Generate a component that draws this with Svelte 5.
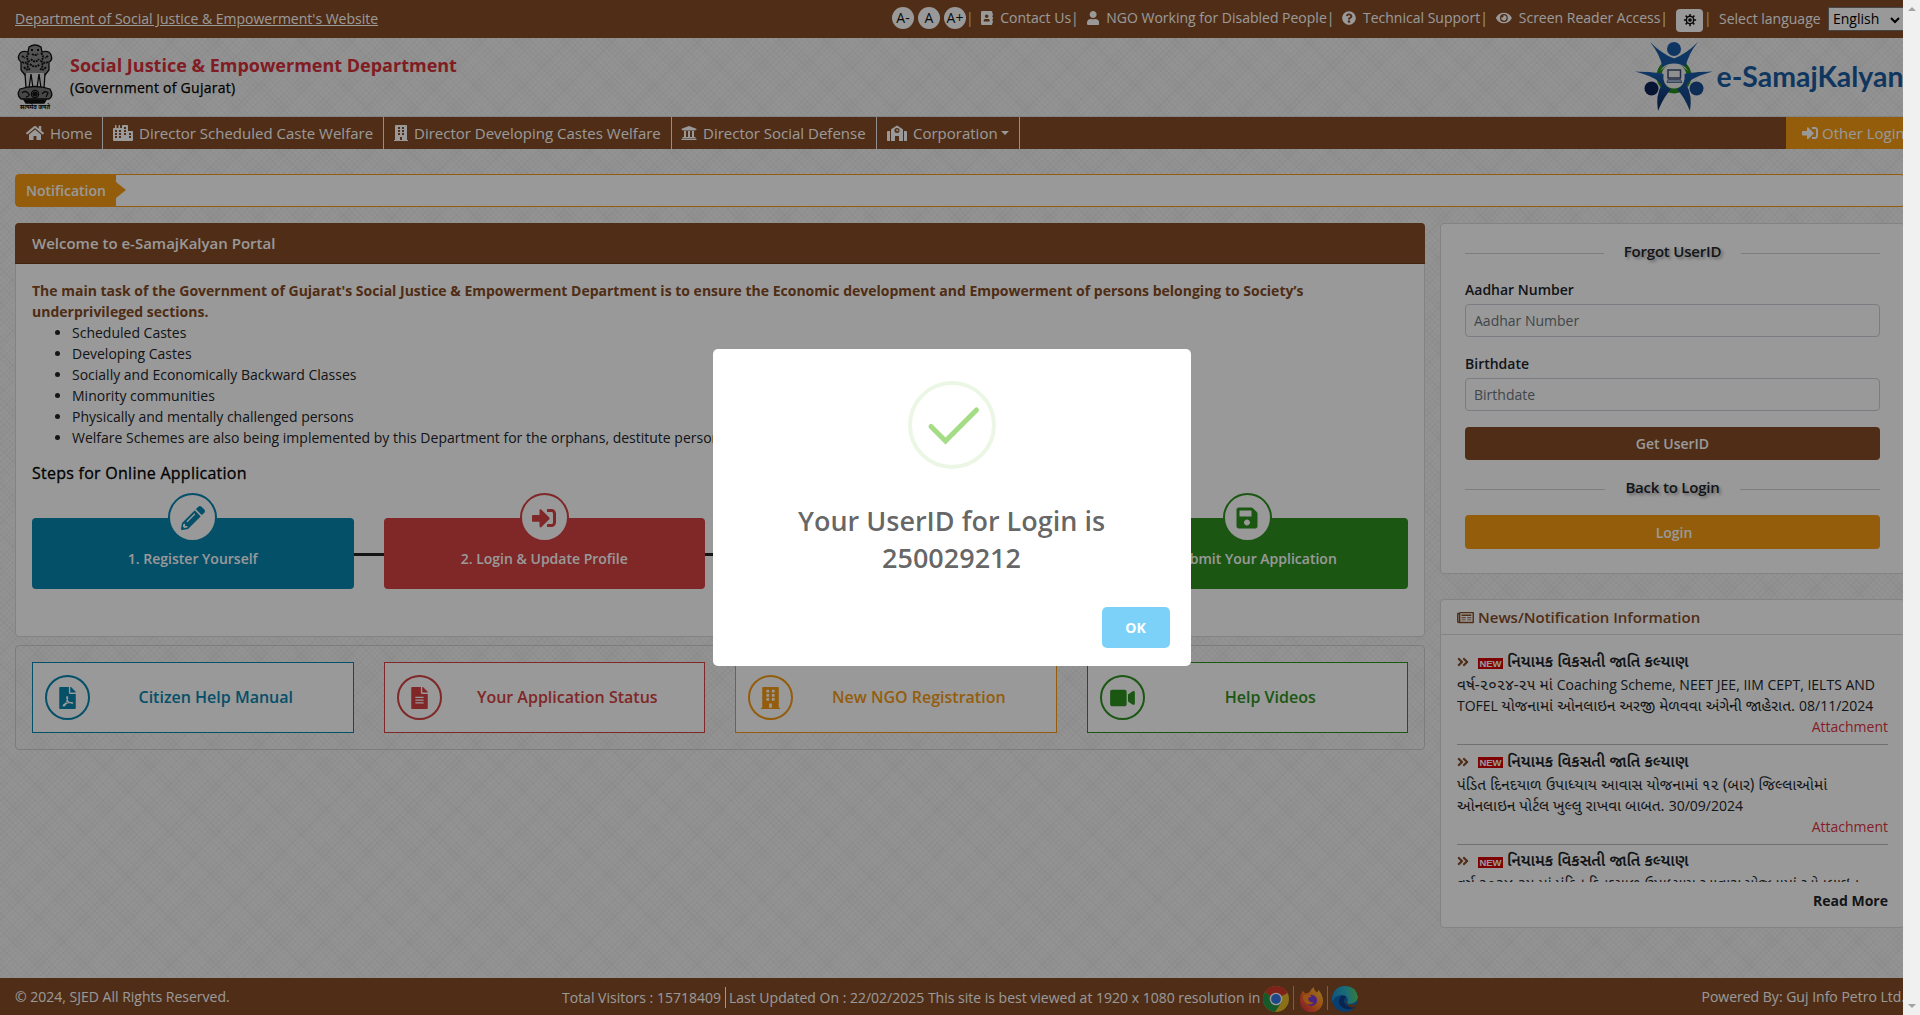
<script>
  const tiles = (list) => list.map(([x, y, w, h]) => `M${x} ${y}h${w}v${h}h-${w}z`).join('');

  const icons = {
    home: ['0 0 576 512', 'M280.37 148.26L96 300.11V464a16 16 0 0 0 16 16l112.06-.29a16 16 0 0 0 15.92-16V368a16 16 0 0 1 16-16h64a16 16 0 0 1 16 16v95.64a16 16 0 0 0 16 16.05L464 480a16 16 0 0 0 16-16V300L295.67 148.26a12.19 12.19 0 0 0-15.3 0zM571.6 251.47L488 182.56V44.05a12 12 0 0 0-12-12h-56a12 12 0 0 0-12 12v72.61L318.47 43a48 48 0 0 0-61 0L4.34 251.47a12 12 0 0 0-1.6 16.9l25.5 31A12 12 0 0 0 45.15 301l235.22-193.74a12.19 12.19 0 0 1 15.3 0L530.9 301a12 12 0 0 0 16.9-1.6l25.5-31a12 12 0 0 0-1.7-16.93z'],
    city: ['0 0 640 512', 'M616 192H480V24c0-13.26-10.74-24-24-24H312c-13.26 0-24 10.74-24 24v72h-64V16c0-8.84-7.16-16-16-16h-16c-8.84 0-16 7.16-16 16v80h-64V16c0-8.84-7.16-16-16-16H80c-8.84 0-16 7.16-16 16v80H24c-13.26 0-24 10.74-24 24v360c0 17.67 14.33 32 32 32h576c17.67 0 32-14.33 32-32V216c0-13.26-10.75-24-24-24z' + tiles([[64, 160, 64, 64], [64, 256, 64, 64], [64, 352, 64, 64], [192, 160, 64, 64], [192, 256, 64, 64], [192, 352, 64, 64], [352, 64, 64, 64], [352, 160, 64, 64], [352, 256, 64, 64], [512, 256, 64, 64], [512, 352, 64, 64]])],
    building: ['0 0 448 512', 'M436 480h-20V24c0-13.255-10.745-24-24-24H56C42.745 0 32 10.745 32 24v456H12c-6.627 0-12 5.373-12 12v20h448v-20c0-6.627-5.373-12-12-12z' + tiles([[128, 64, 64, 64], [256, 64, 64, 64], [128, 160, 64, 64], [256, 160, 64, 64], [128, 256, 64, 64], [256, 256, 64, 64], [192, 384, 64, 96]])],
    bank: ['0 0 512 512', 'M496 128v16a8 8 0 0 1-8 8h-24v12c0 6.627-5.373 12-12 12H60c-6.627 0-12-5.373-12-12v-12H24a8 8 0 0 1-8-8v-16a8 8 0 0 1 4.941-7.392l232-88a7.996 7.996 0 0 1 6.118 0l232 88A8 8 0 0 1 496 128zm-24 304H40c-13.255 0-24 10.745-24 24v16a8 8 0 0 0 8 8h464a8 8 0 0 0 8-8v-16c0-13.255-10.745-24-24-24zM96 192v192H60c-6.627 0-12 5.373-12 12v20h416v-20c0-6.627-5.373-12-12-12h-36V192h-64v192h-64V192h-64v192h-64V192H96z'],
    school: ['0 0 640 512', 'M0 224v272c0 8.84 7.16 16 16 16h80V192H32c-17.67 0-32 14.33-32 32zm608-32h-64v320h80c8.84 0 16-7.16 16-16V224c0-17.67-14.33-32-32-32zM497.8 131.6L338 21.4a32 32 0 0 0-35.5 0L142.2 131.6A32 32 0 0 0 128 158v354h128V368a16 16 0 0 1 16-16h96a16 16 0 0 1 16 16v144h128V158a32 32 0 0 0-14.2-26.4zM320 256a80 80 0 1 1 0-160 80 80 0 0 1 0 160zM304 128h32v40h28v32h-60z'],
    signin: ['0 0 512 512', 'M416 448h-84c-6.6 0-12-5.4-12-12v-40c0-6.6 5.4-12 12-12h84c17.7 0 32-14.3 32-32V160c0-17.7-14.3-32-32-32h-84c-6.6 0-12-5.4-12-12V76c0-6.6 5.4-12 12-12h84c53 0 96 43 96 96v192c0 53-43 96-96 96zm-47-201L201 79c-15-15-41-4.5-41 17v96H24c-13.3 0-24 10.7-24 24v96c0 13.3 10.7 24 24 24h136v96c0 21.5 26 32 41 17l168-168c9.3-9.4 9.3-24.6 0-34z'],
    contact: ['0 0 448 512', 'M436 160c6.6 0 12-5.4 12-12v-40c0-6.6-5.4-12-12-12h-20V48c0-26.5-21.5-48-48-48H48C21.5 0 0 21.5 0 48v416c0 26.5 21.5 48 48 48h320c26.5 0 48-21.5 48-48v-48h20c6.6 0 12-5.4 12-12v-40c0-6.6-5.4-12-12-12h-20v-64h20c6.6 0 12-5.4 12-12v-40c0-6.6-5.4-12-12-12h-20v-64h20zm-228-32c35.300 0 64 28.700 64 64s-28.700 64-64 64-64-28.700-64-64 28.700-64 64-64zm112 236.800c0 10.600-10 19.200-22.400 19.200H118.400C106 384 96 375.400 96 364.800v-19.200c0-31.800 30.100-57.600 67.200-57.600h5c12.300 5.100 25.700 8 39.800 8s27.600-2.900 39.800-8h5c37.100 0 67.200 25.800 67.200 57.600v19.200z'],
    user: ['0 0 448 512', 'M224 256c70.7 0 128-57.3 128-128S294.7 0 224 0 96 57.3 96 128s57.3 128 128 128zm89.6 32h-16.7c-22.2 10.2-46.9 16-72.9 16s-50.6-5.8-72.9-16h-16.7C60.2 288 0 348.2 0 422.4V464c0 26.5 21.5 48 48 48h352c26.5 0 48-21.5 48-48v-41.6c0-74.2-60.2-134.4-134.4-134.4z'],
    question: ['0 0 512 512', 'M504 256c0 136.997-111.043 248-248 248S8 392.997 8 256C8 119.083 119.043 8 256 8s248 111.083 248 248zM262.655 90c-54.497 0-89.255 22.957-116.549 63.758-3.536 5.286-2.353 12.415 2.715 16.258l34.699 26.31c5.205 3.947 12.621 3.008 16.665-2.122 17.864-22.658 30.113-35.797 57.303-35.797 20.429 0 45.698 13.148 45.698 32.958 0 14.976-12.363 22.667-32.534 33.976C247.128 238.528 216 254.941 216 296v4c0 6.627 5.373 12 12 12h56c6.627 0 12-5.373 12-12v-1.333c0-28.462 83.186-29.647 83.186-106.667 0-58.002-60.165-102-116.531-102zM256 338c-25.365 0-46 20.635-46 46 0 25.364 20.635 46 46 46s46-20.636 46-46c0-25.365-20.635-46-46-46z'],
    eye: ['0 0 576 512', 'M572.52 241.4C518.29 135.59 410.93 64 288 64S57.68 135.64 3.48 241.41a32.35 32.35 0 0 0 0 29.19C57.71 376.41 165.07 448 288 448s230.32-71.64 284.52-177.41a32.35 32.35 0 0 0 0-29.19zM288 400a144 144 0 1 1 144-144 143.93 143.93 0 0 1-144 144zm0-240a95.31 95.31 0 0 0-25.31 3.79 47.85 47.85 0 0 1-66.9 66.9A95.78 95.78 0 1 0 288 160z'],
    pencil: ['0 0 512 512', 'M497.9 142.1l-46.1 46.1c-4.7 4.7-12.3 4.7-17 0l-111-111c-4.7-4.7-4.7-12.3 0-17l46.1-46.1c18.7-18.7 49.1-18.7 67.9 0l60.1 60.1c18.8 18.7 18.8 49.1 0 67.9zM284.2 99.8L21.6 362.4.4 483.9c-2.9 16.4 11.4 30.6 27.8 27.8l121.5-21.3 262.6-262.6c4.7-4.7 4.7-12.3 0-17l-111-111c-4.8-4.7-12.4-4.7-17.1 0zM124.1 339.9c-5.5-5.5-5.5-14.3 0-19.8l154-154c5.5-5.5 14.3-5.5 19.8 0s5.5 14.3 0 19.8l-154 154c-5.5 5.5-14.3 5.5-19.8 0zM88 424h48v36.3l-64.5 11.3-31.1-31.1L51.7 376H88v48z'],
    save: ['0 0 448 512', 'M433.941 129.941l-83.882-83.882A48 48 0 0 0 316.118 32H48C21.49 32 0 53.49 0 80v352c0 26.51 21.49 48 48 48h352c26.51 0 48-21.49 48-48V163.882a48 48 0 0 0-14.059-33.941zM224 416c-35.346 0-64-28.654-64-64 0-35.346 28.654-64 64-64s64 28.654 64 64c0 35.346-28.654 64-64 64zm96-304.52V212c0 6.627-5.373 12-12 12H76c-6.627 0-12-5.373-12-12V108c0-6.627 5.373-12 12-12h228.52c3.183 0 6.235 1.264 8.485 3.515l3.48 3.48A11.996 11.996 0 0 1 320 111.48z'],
    file: ['0 0 384 512', 'M224 136V0H24C10.7 0 0 10.7 0 24v464c0 13.3 10.7 24 24 24h336c13.3 0 24-10.7 24-24V160H248c-13.2 0-24-10.8-24-24zM384 122v6H256V0h6c6.4 0 12.500 2.500 17 7l98 98c4.500 4.500 7 10.600 7 17z' + tiles([[96, 224, 192, 32], [96, 288, 192, 32], [96, 352, 192, 32]])],
    pdf: ['0 0 384 512', 'M224 136V0H24C10.7 0 0 10.7 0 24v464c0 13.3 10.7 24 24 24h336c13.3 0 24-10.7 24-24V160H248c-13.2 0-24-10.8-24-24zM384 122v6H256V0h6c6.4 0 12.500 2.500 17 7l98 98c4.500 4.500 7 10.600 7 17zM168 216h34c16 34 2 62-3 85 12 24 29 38 48 49 38-7 78-4 78 20 0 35-55 23-89 4-25 5-46 12-66 21-27 47-58 72-87 56-15-35 17-54 56-76 16-29 26-54 34-79-10-30-16-56-5-80zm11 122c-5 14-11 25-18 36 17-6 30-10 45-13-11-6-20-14-27-23z'],
    video: ['0 0 576 512', 'M336.2 64H47.8C21.4 64 0 85.4 0 111.8v288.4C0 426.6 21.4 448 47.8 448h288.4c26.4 0 47.8-21.4 47.8-47.8V111.8c0-26.4-21.4-47.800-47.800-47.800zm189.400 37.700L416 177.300v157.400l109.600 75.500c21.200 14.600 50.400-.3 50.400-25.800V127.500c0-25.400-29.100-40.400-50.400-25.800z'],
    news: ['0 0 576 512', 'M552 64H112c-20.858 0-38.643 13.377-45.248 32H24c-13.255 0-24 10.745-24 24v272c0 30.928 25.072 56 56 56h496c13.255 0 24-10.745 24-24V88c0-13.255-10.745-24-24-24zM48 392V144h16v248c0 4.411-3.589 8-8 8s-8-3.589-8-8zm480 8H111.422c.374-2.614.578-5.283.578-8V112h416v288zM152 152h336v56H152zM152 248h144v32H152zM152 320h144v32H152zM344 248h144v32H344zM344 320h144v32H344z'],
    chevrons: ['0 0 448 512', 'M224 273L88 409c-9 9-25 9-34 0l-22-23c-10-9-10-24 0-34l96-96-96-96c-10-9-10-25 0-34l22-23c9-9 25-9 34 0l136 136c10 9 10 25 0 34zM416 239L280 103c-9-9-25-9-34 0l-22 23c-10 9-10 25 0 34l96 96-96 96c-10 10-10 25 0 34l22 23c9 9 25 9 34 0l136-136c10-9 10-25 0-34z']
  };

  const helpers = [
    { name: 'contact', text: 'Contact Us', cls: 'contact' },
    { name: 'user', text: 'NGO Working for Disabled People', cls: 'ngo' },
    { name: 'question', text: 'Technical Support', cls: 'support' },
    { name: 'eye', text: 'Screen Reader Access', cls: 'reader' }
  ];

  const menu = [
    { icon: 'home', text: 'Home', cls: 'm-home' },
    { icon: 'city', text: 'Director Scheduled Caste Welfare', cls: 'm-caste' },
    { icon: 'building', text: 'Director Developing Castes Welfare', cls: 'm-dev' },
    { icon: 'bank', text: 'Director Social Defense', cls: 'm-def' },
    { icon: 'school', text: 'Corporation', cls: 'm-corp', caret: true }
  ];

  const groups = [
    'Scheduled Castes',
    'Developing Castes',
    'Socially and Economically Backward Classes',
    'Minority communities',
    'Physically and mentally challenged persons',
    'Welfare Schemes are also being implemented by this Department for the orphans, destitute persons and beggars.'
  ];

  const steps = [
    { icon: 'pencil', text: '1. Register Yourself', tone: 'blue' },
    { icon: 'signin', text: '2. Login & Update Profile', tone: 'red' },
    { icon: 'file', text: '3. Fill Application', tone: 'orange' },
    { icon: 'save', text: '4. Submit Your Application', tone: 'green' }
  ];

  const shortcuts = [
    { icon: 'pdf', text: 'Citizen Help Manual', tone: 'blue' },
    { icon: 'file', text: 'Your Application Status', tone: 'red' },
    { icon: 'building', text: 'New NGO Registration', tone: 'orange' },
    { icon: 'video', text: 'Help Videos', tone: 'green' }
  ];

  const news = [
    ['વર્ષ-૨૦૨૪-૨૫ માં Coaching Scheme, NEET JEE, IIM CEPT, IELTS AND', 'TOFEL યોજનામાં ઓનલાઇન અરજી મેળવવા અંગેની જાહેરાત. 08/11/2024'],
    ['પંડિત દિનદયાળ ઉપાધ્યાય આવાસ યોજનામાં ૧૨ (બાર) જિલ્લાઓમાં', 'ઓનલાઇન પોર્ટલ ખુલ્લુ રાખવા બાબત. 30/09/2024'],
    ['વર્ષ ૨૦૨૪-૨૫ માં પંડિત દિનદયાળ ઉપાધ્યાય આવાસ યોજનામાં ઓનલાઇન']
  ];

  // Split a line into Gujarati and Latin runs so each script gets its own size.
  const runs = (line) => line.split(/([A-Za-z0-9/,][A-Za-z0-9/, ]*)/).filter(Boolean).map((t) => ({ t, gu: /[\u0A80-\u0AFF]/.test(t) }));
</script>

{#snippet icon(name)}
  <svg class="ico" viewBox={icons[name][0]} aria-hidden="true"><path d={icons[name][1]} fill="currentColor" fill-rule="evenodd" /></svg>
{/snippet}

<div class="page">
  <div class="topbar">
    <a class="dept" href="#site">Department of Social Justice &amp; Empowerment's Website</a>
    <div class="tools">
      <span class="size">A-</span><span class="size">A</span><span class="size last">A+</span>
      <span class="bar first">|</span>
      {#each helpers as h}
        <span class="helper {h.cls}">{@render icon(h.name)}<span>{h.text}|</span></span>
      {/each}
      <span class="theme">
        <svg viewBox="0 0 16 16" class="gear"><circle cx="8" cy="8" r="4.2" fill="none" stroke="#111" stroke-width="1.7" /><circle cx="8" cy="8" r="2.1" fill="#111" /><path d="M8 1v3M8 12v3M1 8h3M12 8h3M3 3l2 2M11 11l2 2M13 3l-2 2M5 11l-2 2" stroke="#111" stroke-width="1.7" /></svg>
      </span>
      <span class="bar second-bar">|</span>
      <span class="lang">Select language</span>
      <span class="select">English<svg viewBox="0 0 10 7" class="chev"><path d="M1 1l4 4 4-4" fill="none" stroke="#000" stroke-width="2" /></svg></span>
    </div>
  </div>

  <header>
    <svg class="emblem" viewBox="0 0 38 67">
      <g fill="#8a8a8a" stroke="#111" stroke-width="1.3">
        <path d="M13 3q6-4 12 0l1 5q7-2 9 3 2 5-2 7v8l-4 5H9l-4-5v-8q-4-3-2-7 2-5 9-3z" />
        <path d="M13 9q-4 4 0 8-3 4 0 8M25 9q4 4 0 8 3 4 0 8M15 6h2m4 0h2M16 10q3 2 6 0M6 12l3 2m23-2l-3 2M6 18q4 2 6-1M32 18q-4 2-6-1M15 15q4 5 8 0M14 20q5 5 10 0M8 23q3 4 6 2M30 23q-3 4-6 2" fill="none" stroke-width="1.9" stroke-dasharray="2 .8" />
        <path d="M9 29l1 15h3l2-14 2 14h4l2-14 2 14h3l1-15" fill="#ddd" />
        <path d="M4 45q15-5 30 0 4 7-1 10H5q-5-4-1-10z" fill="#777" />
        <circle cx="19" cy="50" r="3.6" fill="#bbb" /><path d="M6 49q3-3 6 0t-2 4M26 50q3-4 6-1l-2 4M19 46v8M15 50h8M16.500 47.500l5 5m0-5l-5 5" fill="none" />
        <path d="M8 56h22l-2 3H10z" fill="#111" />
      </g>
      <text x="19" y="65" text-anchor="middle" class="motto" textLength="30" lengthAdjust="spacingAndGlyphs">सत्यमेव जयते</text>
    </svg>
    <div class="brand">
      <h1>Social Justice &amp; Empowerment Department</h1>
      <p>(Government of Gujarat)</p>
    </div>
    <svg class="logo" viewBox="0 0 270 76">
      <defs>
        <linearGradient id="lg" x1="0" y1="0" x2="0" y2="1"><stop offset="0" stop-color="#1b5fae" /><stop offset="1" stop-color="#0c2659" /></linearGradient>
        <linearGradient id="lr" x1="0" y1="0" x2="0" y2="1"><stop offset="0" stop-color="#1a5ba6" /><stop offset="1" stop-color="#133f7c" /></linearGradient>
      </defs>
      <circle cx="39" cy="35" r="14.500" fill="none" stroke="#2a8a1e" stroke-width="6" />
      <circle cx="39" cy="35" r="12.500" fill="#f1f1f1" />
      <path d="M25 30L31 22 39 19l8 3 6 8-6-5-8-2-8 2z" fill="#f1f1f1" />
      <path d="M15 1Q27 13 39 17.500 51 13 63 1 53 13 50.500 26.500 46 22.500 39 22.500T27.500 26.500Q25 13 15 1z" fill="#1a5ba6" />
      <path d="M0 30.500Q22 31 28.500 33 27 43.500 36 48.500 29 55 23 70 20.500 54 26.500 44 22 36 0 30.500z" fill="url(#lg)" />
      <path d="M78 30.500Q56 31 49.500 33 51 43.500 42 48.500 49 55 55 70 57.500 54 51.500 44 56 36 78 30.500z" fill="url(#lr)" />
      <circle cx="39" cy="8" r="7" fill="#1a5ba6" /><circle cx="16.500" cy="47.500" r="7" fill="#0c2456" /><circle cx="61.500" cy="47.500" r="7" fill="#174b8f" />
      <rect x="33" y="29" width="12.500" height="8" fill="#eee" stroke="#3c4a70" stroke-width="1.500" /><path d="M33 38.500h12.500l1.500 3H32z" fill="#9fb0d0" stroke="#5f7298" />
      <text x="81.500" y="46" class="wordmark" textLength="187" lengthAdjust="spacingAndGlyphs">e-SamajKalyan</text>
    </svg>
  </header>

  <nav>
    {#each menu as m}
      <a href="#nav" class={m.cls}>{@render icon(m.icon)}<span>{m.text}</span>{#if m.caret}<i class="caret"></i>{/if}</a>
    {/each}
    <a href="#login" class="other">{@render icon('signin')}<span>Other Login</span></a>
  </nav>

  <div class="notice"><strong>Notification</strong></div>

  <div class="columns">
    <main>
      <section class="card welcome">
        <h2>Welcome to e-SamajKalyan Portal</h2>
        <div class="welcome-body">
          <p class="lead">The main task of the Government of Gujarat's Social Justice &amp; Empowerment Department is to ensure the Economic development and Empowerment of persons belonging to Society’s<br />underprivileged sections.</p>
          <ul>{#each groups as g}<li>{g}</li>{/each}</ul>
          <h3>Steps for Online Application</h3>
          <div class="steps">
            {#each steps as s}
              <div class="step {s.tone}"><span class="disc">{@render icon(s.icon)}</span><span>{s.text}</span></div>
            {/each}
          </div>
        </div>
      </section>
      <section class="shortcuts">
        {#each shortcuts as s}
          <a href="#go" class="shortcut {s.tone}"><span class="ring">{@render icon(s.icon)}</span><span class="cap">{s.text}</span></a>
        {/each}
      </section>
    </main>

    <aside>
      <section class="card forgot">
        <div class="rule">Forgot UserID</div>
        <label for="aadhar">Aadhar Number</label>
        <input id="aadhar" placeholder="Aadhar Number" />
        <label for="birth" class="tight">Birthdate</label>
        <input id="birth" placeholder="Birthdate" />
        <button class="get">Get UserID</button>
        <div class="rule second">Back to Login</div>
        <button class="login">Login</button>
      </section>
      <section class="card news">
        <h4>{@render icon('news')}News/Notification Information</h4>
        <div class="feed">
          {#each news as lines}
            <article>
              <div class="headline">{@render icon('chevrons')}<b class="new">NEW</b><strong>નિયામક વિકસતી જાતિ કલ્યાણ</strong></div>
              {#each lines as line}<p>{#each runs(line) as r}<span class:gu={r.gu}>{r.t}</span>{/each}</p>{/each}
              <a href="#file">Attachment</a>
            </article>
          {/each}
        </div>
        <a class="more" href="#more">Read More</a>
      </section>
    </aside>
  </div>

  <footer>
    <span class="copy">© 2024, SJED All Rights Reserved.</span>
    <div class="visits">
      <span class="count">Total Visitors : 15718409</span>
      <span>Last Updated On : 22/02/2025 This site is best viewed at 1920 x 1080 resolution in</span>
      <svg class="browser chrome" viewBox="0 0 26 26"><circle cx="13" cy="13" r="13" fill="#e9b92a" /><path d="M13 13L1.700 6.500A13 13 0 0 1 24.500 7z" fill="#d33a2c" /><path d="M13 13L1.700 6.500A13 13 0 0 0 12 26l6.500-10z" fill="#259447" /><circle cx="13" cy="13" r="6.300" fill="#fff" /><circle cx="13" cy="13" r="4.900" fill="#3878df" /></svg>
      <i class="split"></i>
      <svg class="browser fox" viewBox="0 0 26 26"><defs><linearGradient id="ff" x1="1" y1="0" x2="0" y2="1"><stop offset="0" stop-color="#ffd43c" /><stop offset=".5" stop-color="#ff7a20" /><stop offset="1" stop-color="#d9204f" /></linearGradient></defs><path d="M4 4l3 3 4-1q2-4 5-6 0 4 4 6l1-3q5 6 5 12a12.500 12.500 0 0 1-25 0Q1 9 4 4z" fill="url(#ff)" /><circle cx="13.500" cy="14.500" r="6" fill="#7b3bd6" /><path d="M5 9q5-2 9 1l-4 2q0 5 6 5-5 4-9 0-4-4-2-8z" fill="#ff8a24" /></svg>
      <i class="split"></i>
      <svg class="browser edge" viewBox="0 0 26 26"><defs><linearGradient id="ed" x1="0" y1=".4" x2="1" y2=".3"><stop offset="0" stop-color="#1a8fd6" /><stop offset=".6" stop-color="#2fb9c0" /><stop offset="1" stop-color="#63cf54" /></linearGradient></defs><circle cx="13" cy="13" r="13" fill="#1268b8" /><path d="M0 12Q2 0 13 0t13 11q-1 7-9 7-3-1-1-4-1-5-6-5Q3 9 0 16z" fill="url(#ed)" /><path d="M9 10q-6 9 5 13 6 1 10-3-6 2-10-1-4-4 0-8-2-2-5-1z" fill="#0d3f86" /><path d="M15 14q-1 4 4 5 4 0 7-2-3 6-8 4-5-3-3-7z" fill="#844b25" /></svg>
    </div>
    <span class="by">Powered By: Guj Info Petro Ltd.</span>
  </footer>
</div>

<div class="backdrop">
  <div class="dialog" role="dialog">
    <svg class="tick" viewBox="0 0 88 88"><circle cx="44" cy="44" r="42" fill="none" stroke="#a5dc86" stroke-opacity=".22" stroke-width="4" /><path d="M23 45.500L37.500 60 68.500 29" fill="none" stroke="#a5dc86" stroke-width="5" stroke-linecap="round" /></svg>
    <div class="message">Your UserID for Login is 250029212</div>
    <button class="ok">OK</button>
  </div>
</div>
<div class="scrollbar"><i class="up"></i><i class="down"></i></div>

<style>
  :global(body) { margin: 0; overflow: hidden; }
  * { box-sizing: border-box; }
  h1, h2, h3, h4, p, ul { margin: 0; }
  a { color: inherit; text-decoration: none; }
  button, input { font: inherit; }
  .ico { display: block; flex: none; }
  .page {
    width: 1920px; height: 1015px; display: flex; flex-direction: column;
    font: 14px/21px "Open Sans", "Noto Sans Gujarati", "Noto Sans", sans-serif; color: #212529;
    background:
      repeating-linear-gradient(45deg, rgba(0,0,0,.026) 0 1px, transparent 1px 4px),
      repeating-linear-gradient(-45deg, rgba(0,0,0,.026) 0 1px, transparent 1px 4px),
      repeating-linear-gradient(45deg, rgba(0,0,0,.012) 0 3px, transparent 14px 26px, rgba(0,0,0,.012) 31px),
      repeating-linear-gradient(-45deg, rgba(0,0,0,.012) 0 3px, transparent 14px 26px, rgba(0,0,0,.012) 31px),
      #f6f6f6;
  }

  .topbar { height: 38px; flex: none; background: #844b25; color: #fff; display: flex; align-items: center; justify-content: space-between; padding: 0 15px; }
  .dept { text-decoration: underline; padding-bottom: 1px; }
  .tools { display: flex; align-items: center; height: 38px; width: 1013px; padding-bottom: 2px; }
  .size { width: 22px; height: 22px; border-radius: 50%; background: #fff; color: #111; text-align: center; margin-right: 4px; flex: none; }
  .size.last { margin-right: 0; }
  .bar { flex: none; color: #e5d9c9; padding-bottom: 2px; }
  .first { width: 15px; }
  .second-bar { width: 15px; }
  .helper { display: flex; align-items: center; flex: none; white-space: nowrap; padding-bottom: 2px; }
  .contact { width: 106px; } .ngo { width: 255px; } .support { width: 154px; } .reader { width: 180px; }
  .helper .ico { height: 14px; width: auto; margin: 2px 7px 0 0; }
  .theme { width: 27px; height: 23px; background: #fff; border-radius: 4px; display: grid; place-items: center; margin: 4px 1px 0 0; flex: none; }
  .gear { width: 14px; height: 14px; }
  .lang { width: 109px; flex: none; padding-top: 1px; }
  .select { background: #fff; color: #000; border: 1px solid #767676; width: 77px; height: 24px; line-height: 21px; padding-left: 4px; flex: none; margin-top: 2px; }
  .chev { width: 10px; height: 7px; margin-left: 11px; }

  header { height: 79px; flex: none; display: flex; padding: 0 15px; border-bottom: 1px solid #d9dde0; }
  .emblem { width: 38px; height: 67px; margin: 6px 16px 0 1px; }
  .motto { font: 700 6px "Noto Sans", sans-serif; }
  .brand { padding-top: 15px; flex: 1; }
  h1 { font-size: 18px; line-height: 24px; font-weight: 700; color: #d8303a; }
  .brand p { color: #000; line-height: 22px; letter-spacing: .26px; -webkit-text-stroke: .25px #000; }
  .logo { width: 270px; height: 76px; margin: 3px 0 0; }
  .wordmark { font: 700 28px Lato, sans-serif; fill: #1a5a9f; }

  nav { height: 32px; flex: none; background: #844b25; color: #fff; display: flex; font-size: 15px; }
  nav a { display: flex; align-items: center; padding-left: 10px; border-right: 1px solid #eee; flex: none; white-space: nowrap; }
  nav .ico { height: 16px; width: auto; margin-right: 6px; }
  nav .m-home { width: 103px; padding-left: 26px; } .m-caste { width: 281px; } .m-dev { width: 288px; } .m-def { width: 205px; } .m-corp { width: 143px; }
  .caret { border: 4px solid transparent; border-top-color: #fff; border-bottom: 0; margin-left: 3px; }
  nav .m-def { padding-left: 9px; }
  nav .other { margin-left: auto; width: 134px; background: #f59b14; border: 0; padding-left: 16px; }
  nav .other .ico { margin-right: 4px; }

  .notice { margin: 25px 15px 0; height: 33px; flex: none; border: 1px solid #f59b14; border-radius: 4px; background: #fff; }
  .notice strong { display: block; position: relative; width: 100px; height: 31px; line-height: 31px; background: #f59b14; color: #fff; text-align: center; font-weight: 600; }
  .notice strong::after { content: ""; position: absolute; left: 100px; top: 7px; border: 8.5px solid transparent; border-left: 10px solid #f59b14; border-right: 0; }

  .columns { display: flex; gap: 15px; padding: 16px 15px 0; flex: 1; }
  main { width: 1410px; flex: none; }
  .card { background: #fff; border: 1px solid #dadada; border-radius: 4px; }
  .welcome { height: 414px; }
  h2 { height: 41px; margin: -1px -1px 0; padding-left: 17px; line-height: 40px; font-size: 15px; font-weight: 600; color: #fff; background: #844b25; border-bottom: 1px solid #6c3b1a; border-radius: 4px 4px 0 0; }
  .welcome-body { padding: 16px 16px 0; }
  .lead { font-weight: 700; color: #844b25; white-space: nowrap; }
  ul { padding-left: 40px; }
  h3 { font-size: 16px; line-height: 22px; font-weight: 400; letter-spacing: .26px; -webkit-text-stroke: .3px #000; color: #000; margin-top: 14px; }
  .steps { display: flex; gap: 30px; margin-top: 34px; background: linear-gradient(#222, #222) 0 35px / 100% 3px no-repeat; }
  .step { flex: 1; height: 71px; border-radius: 4px; position: relative; display: flex; justify-content: center; padding-top: 30px; font-weight: 600; background: currentColor; }
  .step > span:last-child { color: #fff; }
  .disc { position: absolute; top: -25px; left: calc(50% - 24.5px); width: 49px; height: 49px; border: 2px solid; border-radius: 50%; background: #fff; display: grid; place-items: center; }
  .disc .ico { height: 24px; width: 24px; }
  .blue { color: #0885b0; } .red { color: #d54143; } .orange { color: #f59b14; } .green { color: #2d9121; }
  .shortcuts { margin-top: 8px; height: 105px; border: 1px solid #cfcfcf; border-radius: 4px; padding: 16px; display: flex; gap: 30px; }
  .shortcut { flex: 1; height: 71px; border: 1px solid; background: #fff; display: flex; align-items: center; padding-left: 12px; font-size: 16px; font-weight: 600; }
  .ring { width: 45px; height: 45px; border: 2px solid; border-radius: 50%; display: grid; place-items: center; flex: none; }
  .ring .ico { height: 22px; width: 25px; }
  .cap { flex: 1; text-align: center; padding-right: 11px; }

  aside { width: 465px; flex: none; }
  .forgot { height: 351px; padding: 17px 24px 0; display: flex; flex-direction: column; }
  .rule { display: flex; align-items: center; gap: 20px; font-size: 15px; font-weight: 600; letter-spacing: -.2px; line-height: 21px; text-shadow: 2px 2px 3px rgba(0,0,0,.35); }
  .rule::before, .rule::after { content: ""; flex: 1; height: 1px; background: #d3d3d3; margin-top: 4px; }
  label { font-weight: 600; margin-top: 17px; line-height: 21px; }
  .tight { margin-top: 16px; }
  input { height: 33px; margin-top: 4px; border: 1px solid #ced0da; border-radius: 4px; padding: 0 8px; background: #fff; }
  input::placeholder { color: #6c757d; opacity: 1; }
  #birth { margin-bottom: 16px; }
  button { border: 0; border-radius: 4px; color: #fff; font-weight: 600; }
  .get { height: 33px; background: #844b25; padding: 0; }
  .second { margin-top: 17px; }
  .login { height: 34px; margin-top: 17px; background: #f59b14; padding: 0 0 0 3px; }

  .news { margin-top: 25px; height: 329px; }
  h4 { display: flex; align-items: center; height: 35px; padding-left: 16px; color: #844b25; font-size: 15px; font-weight: 600; border-bottom: 1px solid #dadada; }
  h4 .ico { width: 17px; height: 15px; margin-right: 4px; }
  .feed { height: 232px; margin: 15px 16px 0; overflow: hidden; }
  article { height: 95px; border-bottom: 1px solid #bbb; margin-bottom: 4.5px; }
  .headline { display: flex; align-items: center; height: 24px; }
  .headline .ico { width: 12px; height: 14px; color: #844b25; margin-right: 9px; }
  .new { width: 25px; height: 11px; background: #d40000; color: #fff; font: 700 9.5px/11px "Liberation Sans", sans-serif; text-align: center; margin: 2px 4px 0 0; }
  .headline strong { font-weight: 600; font-size: 15.8px; line-height: 24px; margin-top: -2px; }
  article p { line-height: 21px; white-space: pre; height: 21px; }
  .gu { font-size: 15.4px; line-height: 20px; }
  article a { display: block; color: #dc3545; text-align: right; }
  .more { display: block; text-align: right; margin: 8px 16px 0 0; font-weight: 700; }

  footer { height: 37px; flex: none; background: #844b25; color: #fff; display: flex; align-items: center; padding: 0 15px; }
  .copy { width: 547px; }
  .visits { display: flex; align-items: center; flex: 1; padding-top: 2px; }
  .count { border-right: 1px solid #fff; padding-right: 4px; margin-right: 3px; }
  .browser { width: 26px; height: 26px; margin-top: 2px; flex: none; }
  .chrome { margin-left: 3px; }
  .fox { width: 24px; margin-left: 1px; }
  .split { width: 1px; height: 24px; background: #b8a28f; margin: 0 4px; }

  .backdrop { position: fixed; inset: 0 17px 0 0; background: rgba(0,0,0,.4); display: flex; justify-content: center; align-items: center; font: 14px/21px "Open Sans", sans-serif; }
  .dialog { width: 478px; height: 317px; background: #fff; border-radius: 5px; display: flex; flex-direction: column; align-items: center; padding: 32px 21px 0; }
  .tick { width: 88px; height: 88px; flex: none; }
  .message { margin-top: 33px; width: 340px; text-align: center; font-size: 27px; line-height: 37px; font-weight: 600; color: rgba(0,0,0,.62); }
  .ok { align-self: flex-end; margin-top: 31px; width: 68px; height: 41px; background: #7cd1f9; border-radius: 5px; font-weight: 700; }
  .scrollbar { position: fixed; top: 0; right: 0; bottom: 0; width: 17px; background: #f0f0f0; display: flex; flex-direction: column; justify-content: space-between; align-items: center; padding: 7px 0; }
  .scrollbar i { border: 4px solid transparent; }
  .scrollbar .up { border-top: 0; border-bottom-color: #a3a3a3; }
  .scrollbar .down { border-bottom: 0; border-top-color: #a3a3a3; }
</style>
